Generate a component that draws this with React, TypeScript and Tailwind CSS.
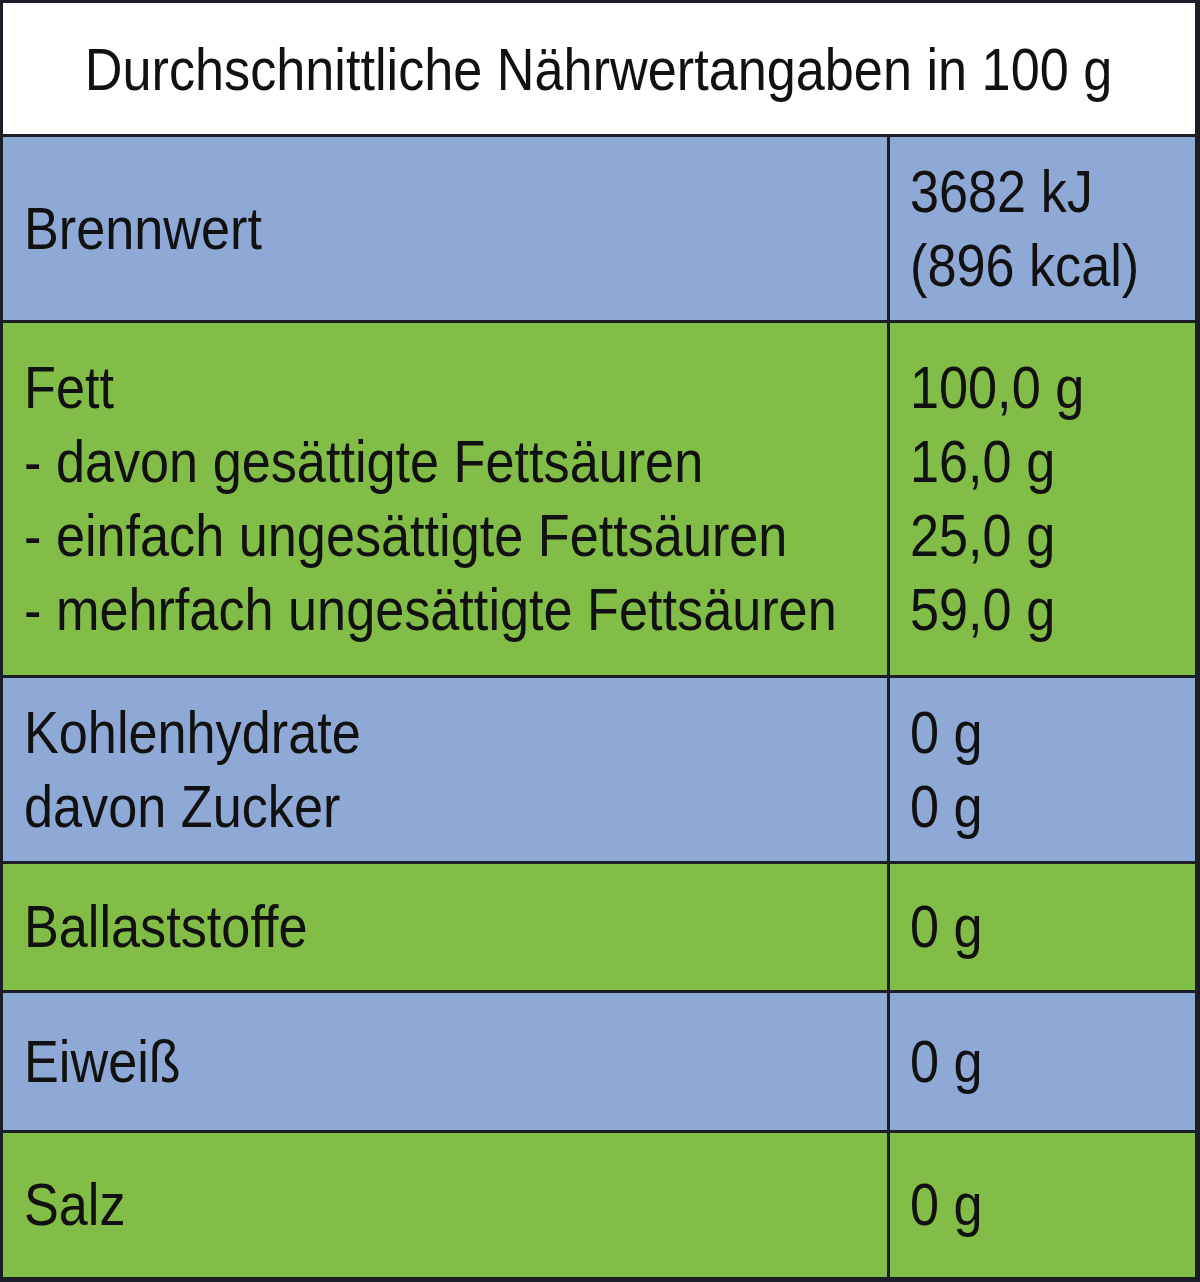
type Row = {
  left: string[];
  right: string[];
  bg: string;
  h: string;
};

const rows: Row[] = [
  { left: ["Brennwert"], right: ["3682 kJ", "(896 kcal)"], bg: "bg-[#8fa9d7]", h: "h-[186px]" },
  {
    left: [
      "Fett",
      "- davon gesättigte Fettsäuren",
      "- einfach ungesättigte Fettsäuren",
      "- mehrfach ungesättigte Fettsäuren",
    ],
    right: ["100,0 g", "16,0 g", "25,0 g", "59,0 g"],
    bg: "bg-[#82bd48]",
    h: "h-[355px]",
  },
  { left: ["Kohlenhydrate", "davon Zucker"], right: ["0 g", "0 g"], bg: "bg-[#8fa9d7]", h: "h-[186px]" },
  { left: ["Ballaststoffe"], right: ["0 g"], bg: "bg-[#82bd48]", h: "h-[129px]" },
  { left: ["Eiweiß"], right: ["0 g"], bg: "bg-[#8fa9d7]", h: "h-[140px]" },
  { left: ["Salz"], right: ["0 g"], bg: "bg-[#82bd48]", h: "h-[147px]" },
];

const Lines = ({ lines }: { lines: string[] }) => (
  <div className="flex flex-col">
    {lines.map((l) => (
      <span key={l} className="block whitespace-nowrap leading-[74px] origin-left scale-x-[0.885]">
        {l}
      </span>
    ))}
  </div>
);

export default function App() {
  return (
    <div
      className="w-[1200px] h-[1282px] bg-white text-[59px] text-[#111111] border-t-[3px] border-l-[3px] border-r-[5px] border-b-[5px] border-[#1c1e27] flex flex-col"
      style={{ fontFamily: '"Liberation Sans", Arial, sans-serif' }}
    >
      <div className="h-[131px] flex items-center justify-center bg-white">
        <span className="whitespace-nowrap scale-x-[0.885] pt-1">Durchschnittliche Nährwertangaben in 100 g</span>
      </div>
      {rows.map((r, i) => (
        <div key={i} className={`flex border-t-[3px] border-[#1c1e27] ${r.bg} ${r.h}`}>
          <div className="w-[887px] border-r-[3px] border-[#1c1e27] pl-[21px] flex items-center">
            <Lines lines={r.left} />
          </div>
          <div className="flex-1 pl-[20px] flex items-center">
            <Lines lines={r.right} />
          </div>
        </div>
      ))}
    </div>
  );
}
